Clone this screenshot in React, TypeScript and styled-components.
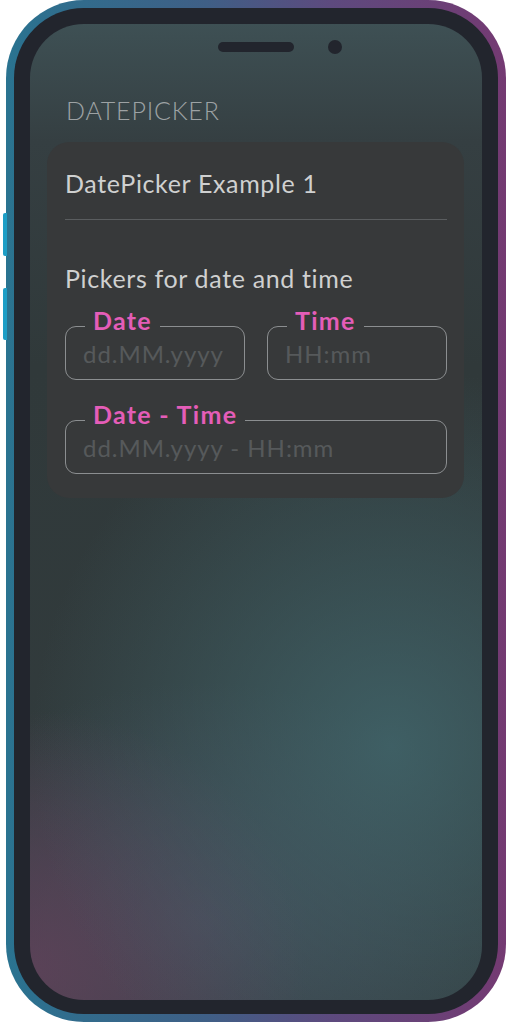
import React from 'react';
import styled, { createGlobalStyle } from 'styled-components';

const GlobalStyle = createGlobalStyle`
  body {
    margin: 0;
    background: #ffffff;
    font-family: Lato, "Open Sans", sans-serif;
  }
`;

const Page = styled.div`
  width: 512px;
  height: 1024px;
  padding-left: 6px;
  box-sizing: border-box;
`;

const Frame = styled.div`
  position: relative;
  width: 500px;
  height: 1022px;
  box-sizing: border-box;
  padding: 8px;
  border-radius: 78px;
  background: linear-gradient(90deg, #2a7390 0%, #3f5f86 40%, #5d4a7e 65%, #743a72 100%);
`;

const SideButton = styled.div<{ top: number; height: number }>`
  position: absolute;
  left: -3px;
  top: ${(p) => p.top}px;
  width: 4px;
  height: ${(p) => p.height}px;
  border-radius: 2px 0 0 2px;
  background: #1d9ec6;
`;

const Bezel = styled.div`
  height: 100%;
  box-sizing: border-box;
  padding: 16px 16px 14px;
  border-radius: 70px;
  background: #22252d;
`;

const Screen = styled.div`
  height: 100%;
  border-radius: 54px;
  overflow: hidden;
  display: flex;
  flex-direction: column;
  background:
    radial-gradient(ellipse 360px 380px at 80% 74%, rgba(66, 104, 110, 0.8), rgba(66, 104, 110, 0) 100%),
    radial-gradient(ellipse 280px 260px at 0% 97%, rgba(96, 66, 90, 0.85), rgba(96, 66, 90, 0) 100%),
    radial-gradient(ellipse 320px 240px at 38% 92%, rgba(84, 86, 110, 0.5), rgba(84, 86, 110, 0) 100%),
    linear-gradient(180deg, #3e5054 0%, #353f42 12%, #30393a 35%, #323c3e 100%);
`;

const Notch = styled.div`
  display: grid;
  grid-template-columns: 1fr 76px 1fr;
  align-items: center;
  margin-top: 16px;
  height: 14px;
`;

const Speaker = styled.div`
  grid-column: 2;
  height: 10px;
  border-radius: 5px;
  background: #22252d;
`;

const Camera = styled.div`
  margin-left: 34px;
  width: 14px;
  height: 14px;
  border-radius: 50%;
  background: #22252d;
`;

const Content = styled.div`
  padding: 41px 18px 0 17px;
  display: flex;
  flex-direction: column;
`;

const SectionTitle = styled.div`
  margin-left: 19px;
  font-size: 25px;
  line-height: 30px;
  font-weight: 300;
  letter-spacing: 0.8px;
  color: #9da2a4;
`;

const Card = styled.div`
  margin-top: 17px;
  padding: 26px 17px 24px 18px;
  border-radius: 22px;
  background: #37393a;
  display: flex;
  flex-direction: column;
`;

const CardText = styled.div<{ gap?: number }>`
  margin-top: ${(p) => p.gap ?? 0}px;
  font-size: 25px;
  line-height: 30px;
  letter-spacing: 0.65px;
  color: #cfd0d0;
`;

const Divider = styled.div`
  margin-top: 21px;
  height: 1px;
  background: #5a5d5f;
`;

const FieldRow = styled.div`
  margin-top: 14px;
  display: grid;
  grid-template-columns: 1fr 1fr;
  gap: 22px;
`;

const Field = styled.fieldset<{ spaced?: boolean }>`
  margin: ${(p) => (p.spaced ? '21px' : '0')} 0 0;
  min-width: 0;
  padding: 0 16px 12px 17px;
  border: 1px solid #8b8e90;
  border-radius: 11px;
`;

const Legend = styled.legend`
  margin-left: 2px;
  padding: 0 8px 12px;
  font-size: 25px;
  line-height: 26px;
  font-weight: 700;
  letter-spacing: 1.3px;
  color: #e45db8;
`;

const Input = styled.input`
  display: block;
  width: 100%;
  margin-top: -4px;
  padding: 0;
  height: 26px;
  border: none;
  outline: none;
  background: transparent;
  font-family: Lato, "Open Sans", sans-serif;
  font-size: 24px;
  line-height: 26px;
  letter-spacing: 0.95px;
  color: #cfd0d0;

  &::placeholder {
    color: #56595b;
  }
`;

const PickerField: React.FC<{ label: string; placeholder: string; spaced?: boolean }> = ({
  label,
  placeholder,
  spaced,
}) => (
  <Field spaced={spaced}>
    <Legend>{label}</Legend>
    <Input placeholder={placeholder} />
  </Field>
);

const App: React.FC = () => {
  return (
    <>
      <GlobalStyle />
      <Page>
        <Frame>
          <SideButton top={213} height={43} />
          <SideButton top={288} height={52} />
          <Bezel>
            <Screen>
              <Notch>
                <Speaker />
                <Camera />
              </Notch>
              <Content>
                <SectionTitle>DATEPICKER</SectionTitle>
                <Card>
                  <CardText>DatePicker Example 1</CardText>
                  <Divider />
                  <CardText gap={43}>Pickers for date and time</CardText>
                  <FieldRow>
                    <PickerField label="Date" placeholder="dd.MM.yyyy" />
                    <PickerField label="Time" placeholder="HH:mm" />
                  </FieldRow>
                  <PickerField label="Date - Time" placeholder="dd.MM.yyyy - HH:mm" spaced />
                </Card>
              </Content>
            </Screen>
          </Bezel>
        </Frame>
      </Page>
    </>
  );
};

export default App;
